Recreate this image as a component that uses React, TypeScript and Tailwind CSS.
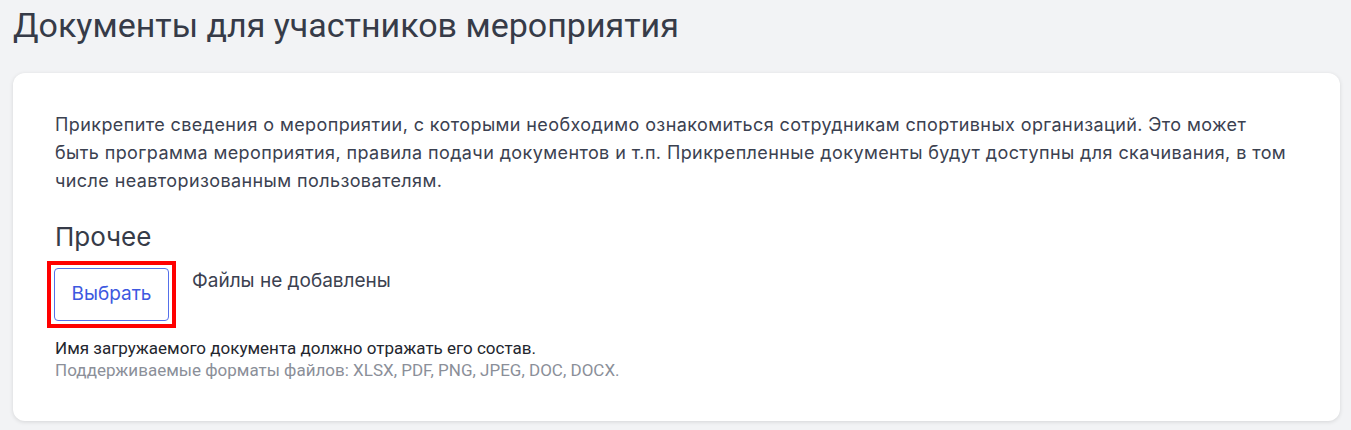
export default function App() {
  return (
    <div className="min-h-[430px] bg-[#f2f3f5] pl-[13px] pr-[11px] pt-[4px] pb-[10px]">
      <h1 className="font-['Roboto',sans-serif] text-[34px] leading-[42px] text-[#363b48]">
        Документы для участников мероприятия
      </h1>
      <div className="mt-[27px] rounded-xl bg-white px-[42px] pt-[38px] pb-[40px] shadow-[0_1px_4px_rgba(0,0,0,0.12)]">
        <p className="font-['Inter',sans-serif] text-[18px] leading-[28px] tracking-[0.4px] text-[#3b4150]">
          Прикрепите сведения о мероприятии, с которыми необходимо ознакомиться сотрудникам спортивных организаций. Это может
          <br />
          быть программа мероприятия, правила подачи документов и т.п. Прикрепленные документы будут доступны для скачивания, в том
          <br />
          числе неавторизованным пользователям.
        </p>
        <h2 className="mt-[26px] font-['Inter',sans-serif] text-[26px] leading-[32px] text-[#363b48]">Прочее</h2>
        <div className="mt-[8px] flex items-start">
          <div className="-ml-[8px] border-[4px] border-[#ff0000] p-[3px]">
            <button className="h-[53px] w-[115px] rounded-[4px] border border-[#5570ea] bg-white font-['Inter',sans-serif] text-[19px] text-[#3d58e0]">
              Выбрать
            </button>
          </div>
          <span className="ml-[16px] mt-[7px] font-['Inter',sans-serif] text-[19px] leading-[26px] text-[#3b4150]">
            Файлы не добавлены
          </span>
        </div>
        <div className="mt-[9px] font-['Roboto',sans-serif] text-[17px] leading-[22px]">
          <div className="text-[#23262e]">Имя загружаемого документа должно отражать его состав.</div>
          <div className="text-[#8b8f99]">Поддерживаемые форматы файлов: XLSX, PDF, PNG, JPEG, DOC, DOCX.</div>
        </div>
      </div>
    </div>
  )
}
